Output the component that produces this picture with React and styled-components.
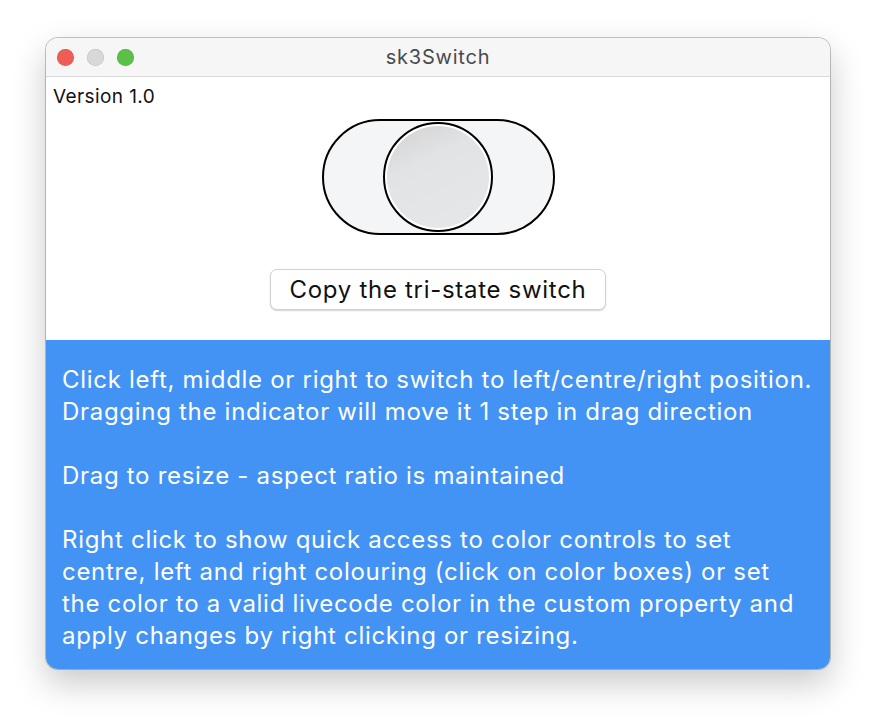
import React from "react";
import styled, { createGlobalStyle } from "styled-components";

const Global = createGlobalStyle`
  html, body { margin: 0; padding: 0; background: #ffffff; }
  body { font-family: Inter, "Noto Sans", "Liberation Sans", sans-serif; }
`;

const Page = styled.div`
  padding: 38px 46px 0 46px;
  width: 876px;
  height: 724px;
  box-sizing: border-box;
`;

const Window = styled.div`
  width: 784px;
  height: 631px;
  border-radius: 12px;
  overflow: hidden;
  display: flex;
  flex-direction: column;
  box-shadow: 0 0 0 1px rgba(0, 0, 0, 0.22), 0 14px 34px rgba(0, 0, 0, 0.22);
  background: #fff;
`;

const TitleBar = styled.div`
  height: 38px;
  flex: none;
  background: #f6f6f7;
  border-bottom: 1px solid #dadada;
  display: grid;
  grid-template-columns: 1fr auto 1fr;
  align-items: center;
`;

const Lights = styled.div`
  display: flex;
  gap: 13px;
  padding-left: 11px;
`;

const Light = styled.span`
  width: 17px;
  height: 17px;
  border-radius: 50%;
  background: ${(p) => p.$c};
  box-shadow: inset 0 0 0 0.5px rgba(0, 0, 0, 0.15);
`;

const Title = styled.div`
  font-size: 20px;
  letter-spacing: 0.8px;
  color: #4a4a4a;
`;

const Top = styled.div`
  height: 263px;
  flex: none;
  display: flex;
  flex-direction: column;
  align-items: center;
`;

const Version = styled.div`
  align-self: flex-start;
  font-size: 19px;
  letter-spacing: 0.4px;
  color: #111;
  padding: 9px 0 0 7px;
  line-height: 22px;
`;

const Pill = styled.div`
  margin-top: 11px;
  width: 233px;
  height: 116px;
  box-sizing: border-box;
  border: 2px solid #000;
  border-radius: 58px;
  background: #f4f5f7;
  display: flex;
  align-items: center;
  justify-content: center;
`;

const Knob = styled.div`
  width: 110px;
  height: 110px;
  box-sizing: border-box;
  border-radius: 50%;
  border: 2px solid #000;
  padding: 2px;
  background: #fff;
`;

const KnobFace = styled.div`
  width: 100%;
  height: 100%;
  border-radius: 50%;
  background: linear-gradient(155deg, #d2d2d3 0%, #e2e3e4 35%, #e6e7e8 100%);
`;

const CopyButton = styled.button`
  margin-top: 34px;
  width: 336px;
  height: 41px;
  border-radius: 7px;
  border: 1px solid #d2d2d2;
  background: #fff;
  box-shadow: 0 1px 1.5px rgba(0, 0, 0, 0.18);
  font-family: inherit;
  font-size: 24px;
  letter-spacing: 0.7px;
  color: #111;
  padding: 0;
`;

const Info = styled.div`
  flex: 1;
  background: #4393f5;
  color: #fff;
  font-size: 24px;
  letter-spacing: 0.7px;
  line-height: 32px;
  padding: 24px 16px 0 16px;
  white-space: nowrap;
`;

const Para = styled.p`
  margin: 0 0 32px 0;
`;

export default function App() {
  return (
    <>
      <Global />
      <Page>
        <Window>
          <TitleBar>
            <Lights>
              <Light $c="#ee5e55" />
              <Light $c="#d8d8da" />
              <Light $c="#5bc046" />
            </Lights>
            <Title>sk3Switch</Title>
            <div />
          </TitleBar>
          <Top>
            <Version>Version 1.0</Version>
            <Pill>
              <Knob>
                <KnobFace />
              </Knob>
            </Pill>
            <CopyButton>Copy the tri-state switch</CopyButton>
          </Top>
          <Info>
            <Para>
              Click left, middle or right to switch to left/centre/right position.
              <br />
              Dragging the indicator will move it 1 step in drag direction
            </Para>
            <Para>Drag to resize - aspect ratio is maintained</Para>
            <Para>
              Right click to show quick access to color controls to set
              <br />
              centre, left and right colouring (click on color boxes) or set
              <br />
              the color to a valid livecode color in the custom property and
              <br />
              apply changes by right clicking or resizing.
            </Para>
          </Info>
        </Window>
      </Page>
    </>
  );
}
